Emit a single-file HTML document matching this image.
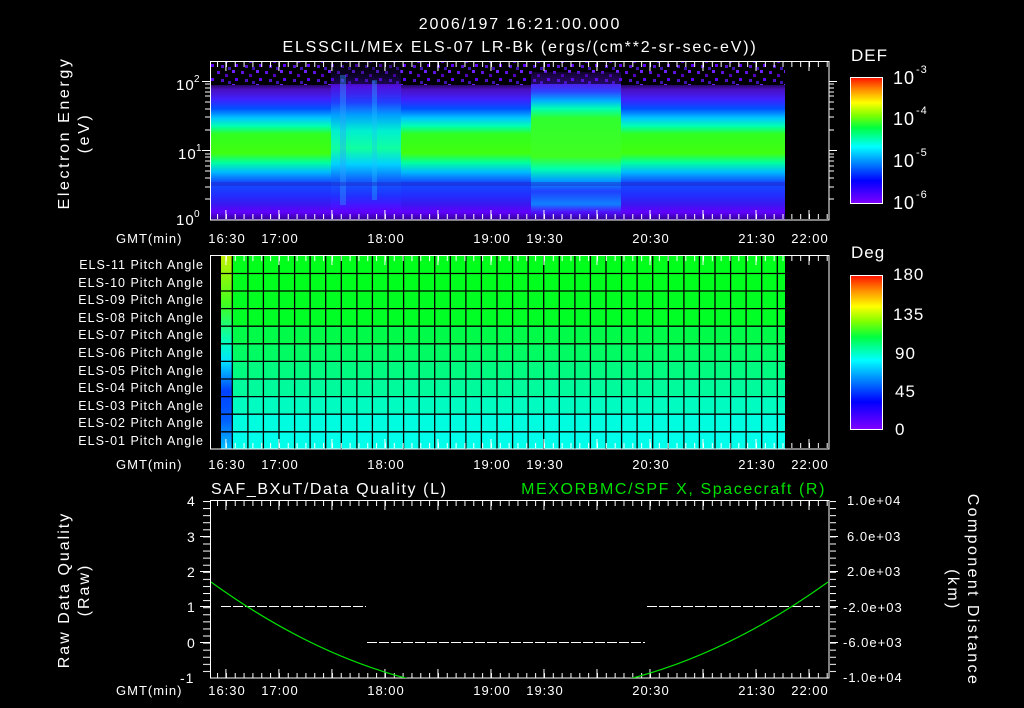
<!DOCTYPE html>
<html><head><meta charset="utf-8"><style>
html,body{margin:0;padding:0;background:#000;}
svg{display:block;}
text{font-family:"Liberation Sans",sans-serif;fill:#fff;letter-spacing:1px;}
</style></head><body>
<svg width="1024" height="708" viewBox="0 0 1024 708" xmlns="http://www.w3.org/2000/svg">
<defs>
<pattern id="tmin" x="217.07" y="0" width="8.835" height="708" patternUnits="userSpaceOnUse"><rect x="0" y="0" width="1" height="708" fill="#fff"/></pattern>
<pattern id="tmaj" x="225.4" y="0" width="53.01" height="708" patternUnits="userSpaceOnUse"><rect x="0" y="0" width="1" height="708" fill="#fff"/></pattern>
<pattern id="ymin" x="0" y="501" width="1024" height="7.08" patternUnits="userSpaceOnUse"><rect x="0" y="0" width="1024" height="1" fill="#fff"/></pattern>
<pattern id="speck" x="0" y="0" width="24" height="14" patternUnits="userSpaceOnUse">
<rect width="24" height="14" fill="#000"/>
<rect x="1" y="1" width="3" height="3" fill="#6010e0"/><rect x="9" y="4" width="3" height="3" fill="#5000c0"/>
<rect x="16" y="0" width="3" height="3" fill="#7020ff"/><rect x="5" y="9" width="3" height="3" fill="#5010d0"/>
<rect x="19" y="8" width="3" height="3" fill="#6000ff"/><rect x="12" y="11" width="3" height="3" fill="#4010b0"/>
</pattern>
<linearGradient id="gStd" gradientUnits="userSpaceOnUse" x1="0" y1="61" x2="0" y2="220">
<stop offset="0" stop-color="#000"/><stop offset="0.12" stop-color="#000"/>
<stop offset="0.18" stop-color="#4a10c0"/><stop offset="0.24" stop-color="#4020ff"/>
<stop offset="0.30" stop-color="#0050ff"/><stop offset="0.36" stop-color="#00c8ff"/>
<stop offset="0.41" stop-color="#00ffb0"/><stop offset="0.46" stop-color="#30ff20"/>
<stop offset="0.58" stop-color="#40ff10"/><stop offset="0.64" stop-color="#00ffa0"/>
<stop offset="0.70" stop-color="#00b8ff"/><stop offset="0.76" stop-color="#1050ff"/>
<stop offset="0.84" stop-color="#2030ff"/><stop offset="0.90" stop-color="#3818f0"/>
<stop offset="0.95" stop-color="#6000ff"/><stop offset="1" stop-color="#300090"/>
</linearGradient>
<linearGradient id="gDis" gradientUnits="userSpaceOnUse" x1="0" y1="61" x2="0" y2="220">
<stop offset="0" stop-color="#000"/><stop offset="0.08" stop-color="#1a0850"/>
<stop offset="0.16" stop-color="#5010e0"/><stop offset="0.26" stop-color="#2040ff"/>
<stop offset="0.34" stop-color="#00a0ff"/><stop offset="0.44" stop-color="#00f0d0"/>
<stop offset="0.55" stop-color="#10ffa0"/><stop offset="0.65" stop-color="#00d0ff"/>
<stop offset="0.75" stop-color="#1060ff"/><stop offset="0.85" stop-color="#2030ff"/>
<stop offset="0.95" stop-color="#6000ff"/><stop offset="1" stop-color="#300090"/>
</linearGradient>
<linearGradient id="gTall" gradientUnits="userSpaceOnUse" x1="0" y1="61" x2="0" y2="220">
<stop offset="0" stop-color="#000"/><stop offset="0.06" stop-color="#200860"/>
<stop offset="0.12" stop-color="#5a10e0"/><stop offset="0.19" stop-color="#3040ff"/>
<stop offset="0.25" stop-color="#00b0ff"/><stop offset="0.30" stop-color="#00ffb0"/>
<stop offset="0.36" stop-color="#30ff30"/><stop offset="0.60" stop-color="#40ff20"/>
<stop offset="0.68" stop-color="#00ffb0"/><stop offset="0.75" stop-color="#00a0ff"/>
<stop offset="0.82" stop-color="#2040ff"/><stop offset="0.90" stop-color="#1080ff"/>
<stop offset="0.95" stop-color="#5010ff"/><stop offset="1" stop-color="#300090"/>
</linearGradient>
<linearGradient id="cbar" x1="0" y1="1" x2="0" y2="0">
<stop offset="0" stop-color="#8000ff"/><stop offset="0.18" stop-color="#0000ff"/>
<stop offset="0.35" stop-color="#00a0ff"/><stop offset="0.45" stop-color="#00ffff"/>
<stop offset="0.6" stop-color="#00ff40"/><stop offset="0.7" stop-color="#80ff00"/>
<stop offset="0.8" stop-color="#ffff00"/><stop offset="0.9" stop-color="#ff9000"/>
<stop offset="1" stop-color="#ff1000"/>
</linearGradient>
<linearGradient id="firstcol" x1="0" y1="0" x2="0" y2="1">
<stop offset="0" stop-color="#c0f000"/><stop offset="0.25" stop-color="#40ff20"/>
<stop offset="0.45" stop-color="#00ffc0"/><stop offset="0.55" stop-color="#00e0ff"/>
<stop offset="0.7" stop-color="#0040ff"/><stop offset="0.85" stop-color="#0060ff"/>
<stop offset="1" stop-color="#00c0ff"/>
</linearGradient>
<clipPath id="bclip"><rect x="211" y="501" width="618" height="177"/></clipPath>
</defs>

<text x="520" y="29" font-size="16" text-anchor="middle" style="letter-spacing:1.8px">2006/197 16:21:00.000</text>
<text x="520" y="52" font-size="16" text-anchor="middle" style="letter-spacing:1.8px">ELSSCIL/MEx ELS-07 LR-Bk  (ergs/(cm**2-sr-sec-eV))</text>

<rect x="211" y="62" width="574" height="30" fill="url(#speck)"/>
<rect x="211" y="85" width="120" height="135" fill="url(#gStd)"/>
<rect x="331" y="62" width="70" height="158" fill="url(#gDis)"/>
<rect x="401" y="85" width="130" height="135" fill="url(#gStd)"/>
<rect x="531" y="72" width="90" height="148" fill="url(#gTall)"/>
<rect x="621" y="85" width="164" height="135" fill="url(#gStd)"/>
<rect x="211" y="62" width="574" height="22" fill="url(#speck)" opacity="0.6"/>
<rect x="340" y="75" width="6" height="130" fill="#30a0ff" opacity="0.4"/>
<rect x="372" y="80" width="5" height="120" fill="#20c0ff" opacity="0.35"/>
<rect x="211" y="182" width="574" height="4" fill="#2020c0" opacity="0.4"/>
<rect x="210.5" y="61.5" width="618.5" height="158.5" fill="none" stroke="#fff"/>
<rect x="211" y="62" width="617" height="5" fill="url(#tmin)"/>
<rect x="211" y="62" width="617" height="9" fill="url(#tmaj)"/>
<rect x="211" y="214" width="617" height="5" fill="url(#tmin)"/>
<rect x="211" y="210" width="617" height="9" fill="url(#tmaj)"/>
<g stroke="#fff" stroke-width="1">
<path d="M202 150.5H210M202 81.5H210M205 199H210M205 187H210M205 178H210M205 171H210M205 166H210M205 161H210M205 157H210M205 154H210M205 130H210M205 117H210M205 109H210M205 102H210M205 96H210M205 92H210M205 88H210M205 84H210"/>
<path d="M829 150.5H837M829 81.5H837M829 199H834M829 187H834M829 178H834M829 171H834M829 166H834M829 161H834M829 157H834M829 154H834M829 130H834M829 117H834M829 109H834M829 102H834M829 96H834M829 92H834M829 88H834M829 84H834"/>
</g>
<text x="176" y="90" font-size="15">10</text><text x="194" y="82" font-size="10">2</text>
<text x="178" y="159" font-size="15">10</text><text x="196" y="151" font-size="10">1</text>
<text x="176" y="225" font-size="15">10</text><text x="194" y="217" font-size="10">0</text>
<text transform="translate(69,133) rotate(-90)" font-size="16" text-anchor="middle" style="letter-spacing:2.6px">Electron Energy</text>
<text transform="translate(89,133) rotate(-90)" font-size="16" text-anchor="middle" style="letter-spacing:2.6px">(eV)</text>

<text x="851" y="61" font-size="17">DEF</text>
<rect x="850.5" y="77.5" width="32" height="126" fill="url(#cbar)" stroke="#fff"/>
<text x="893" y="84" font-size="18">10</text><text x="916" y="73" font-size="11">-3</text>
<text x="893" y="125" font-size="18">10</text><text x="916" y="114" font-size="11">-4</text>
<text x="893" y="167" font-size="18">10</text><text x="916" y="156" font-size="11">-5</text>
<text x="893" y="209" font-size="18">10</text><text x="916" y="198" font-size="11">-6</text>

<g font-size="13" style="letter-spacing:1.5px">
<text x="116" y="243">GMT(min)</text>
<text x="227" y="243" text-anchor="middle">16:30</text><text x="280" y="243" text-anchor="middle">17:00</text>
<text x="386" y="243" text-anchor="middle">18:00</text><text x="492" y="243" text-anchor="middle">19:00</text>
<text x="545" y="243" text-anchor="middle">19:30</text><text x="651" y="243" text-anchor="middle">20:30</text>
<text x="757" y="243" text-anchor="middle">21:30</text><text x="810" y="243" text-anchor="middle">22:00</text>
</g>

<g>
<rect x="221" y="256" width="564" height="17.6" fill="#00ff1a"/>
<rect x="221" y="273.5" width="564" height="17.6" fill="#00ff1c"/>
<rect x="221" y="291" width="564" height="17.6" fill="#00ff20"/>
<rect x="221" y="308.6" width="564" height="17.6" fill="#00ff24"/>
<rect x="221" y="326.2" width="564" height="17.6" fill="#00fb48"/>
<rect x="221" y="343.8" width="564" height="17.6" fill="#00fb62"/>
<rect x="221" y="361.4" width="564" height="17.6" fill="#00fb80"/>
<rect x="221" y="379" width="564" height="17.6" fill="#00fb9c"/>
<rect x="221" y="396.6" width="564" height="17.6" fill="#00fcc0"/>
<rect x="221" y="414.2" width="564" height="17.6" fill="#00fde0"/>
<rect x="221" y="431.8" width="564" height="17.2" fill="#00ffea"/>
<rect x="221" y="256" width="11" height="193" fill="url(#firstcol)"/>
</g>
<g stroke="#000" stroke-width="1.3">
<path d="M221 273.5H785M221 291H785M221 308.6H785M221 326.2H785M221 343.8H785M221 361.4H785M221 379H785M221 396.6H785M221 414.2H785M221 431.8H785"/>
<path d="M232.3 256V449M247.9 256V449M263.4 256V449M279 256V449M294.6 256V449M310.1 256V449M325.7 256V449M341.3 256V449M356.9 256V449M372.4 256V449M388 256V449M403.6 256V449M419.1 256V449M434.7 256V449M450.3 256V449M465.9 256V449M481.4 256V449M497 256V449M512.6 256V449M528.1 256V449M543.7 256V449M559.3 256V449M574.9 256V449M590.4 256V449M606 256V449M621.6 256V449M637.1 256V449M652.7 256V449M668.3 256V449M683.9 256V449M699.4 256V449M715 256V449M730.6 256V449M746.1 256V449M761.7 256V449M777.3 256V449"/>
</g>
<rect x="210.5" y="255.5" width="618.5" height="193.5" fill="none" stroke="#fff"/>
<rect x="221" y="256" width="607" height="5" fill="url(#tmin)"/>
<rect x="221" y="256" width="607" height="9" fill="url(#tmaj)"/>
<rect x="221" y="443" width="607" height="5" fill="url(#tmin)"/>
<rect x="221" y="439" width="607" height="9" fill="url(#tmaj)"/>
<g font-size="12.5" text-anchor="end" style="letter-spacing:1.4px">
<text x="204" y="269">ELS-11 Pitch Angle</text>
<text x="204" y="287">ELS-10 Pitch Angle</text>
<text x="204" y="304">ELS-09 Pitch Angle</text>
<text x="204" y="322">ELS-08 Pitch Angle</text>
<text x="204" y="339">ELS-07 Pitch Angle</text>
<text x="204" y="357">ELS-06 Pitch Angle</text>
<text x="204" y="375">ELS-05 Pitch Angle</text>
<text x="204" y="392">ELS-04 Pitch Angle</text>
<text x="204" y="410">ELS-03 Pitch Angle</text>
<text x="204" y="427">ELS-02 Pitch Angle</text>
<text x="204" y="445">ELS-01 Pitch Angle</text>
</g>
<text x="851" y="258" font-size="17">Deg</text>
<rect x="850.5" y="275.5" width="32" height="154" fill="url(#cbar)" stroke="#fff"/>
<g font-size="17">
<text x="893" y="280">180</text><text x="893" y="320">135</text><text x="895" y="359">90</text>
<text x="895" y="397">45</text><text x="895" y="435">0</text>
</g>
<g font-size="13" style="letter-spacing:1.5px">
<text x="116" y="469">GMT(min)</text>
<text x="227" y="469" text-anchor="middle">16:30</text><text x="280" y="469" text-anchor="middle">17:00</text>
<text x="386" y="469" text-anchor="middle">18:00</text><text x="492" y="469" text-anchor="middle">19:00</text>
<text x="545" y="469" text-anchor="middle">19:30</text><text x="651" y="469" text-anchor="middle">20:30</text>
<text x="757" y="469" text-anchor="middle">21:30</text><text x="810" y="469" text-anchor="middle">22:00</text>
</g>

<text x="211" y="494" font-size="16" style="letter-spacing:1.6px">SAF_BXuT/Data Quality (L)</text>
<text x="826" y="494" font-size="16" text-anchor="end" style="fill:#00e000;letter-spacing:1.6px">MEXORBMC/SPF X, Spacecraft (R)</text>
<rect x="210.5" y="500.5" width="618.5" height="177.5" fill="none" stroke="#fff"/>
<rect x="211" y="501" width="617" height="5" fill="url(#tmin)"/>
<rect x="211" y="501" width="617" height="9" fill="url(#tmaj)"/>
<rect x="211" y="673" width="617" height="5" fill="url(#tmin)"/>
<rect x="211" y="669" width="617" height="9" fill="url(#tmaj)"/>
<rect x="203" y="501" width="7" height="177" fill="url(#ymin)"/>
<rect x="830" y="501" width="6" height="177" fill="url(#ymin)"/>
<g stroke="#fff"><path d="M200 536.5H210M200 571.5H210M200 606.5H210M200 642.5H210M830 536.5H838M830 571.5H838M830 606.5H838M830 642.5H838"/></g>
<g font-size="14">
<text x="187" y="506">4</text><text x="187" y="542">3</text><text x="187" y="577">2</text>
<text x="187" y="612">1</text><text x="187" y="648">0</text><text x="180" y="683">-1</text>
</g>
<g font-size="13" style="letter-spacing:1.2px">
<text x="847" y="505">1.0e+04</text><text x="847" y="541">6.0e+03</text>
<text x="847" y="576">2.0e+03</text><text x="843" y="612">-2.0e+03</text>
<text x="843" y="647">-6.0e+03</text><text x="843" y="682">-1.0e+04</text>
</g>
<g stroke="#fff" stroke-width="1" stroke-dasharray="10 2">
<path d="M221 606.5H366M367 642.5H645M647 606.5H820"/>
</g>
<g clip-path="url(#bclip)"><path d="M211 582Q518.5 804.2 828 582" fill="none" stroke="#00e000" stroke-width="1.2"/></g>
<text transform="translate(69,590) rotate(-90)" font-size="16" text-anchor="middle" style="letter-spacing:2px">Raw Data Quality</text>
<text transform="translate(89,590) rotate(-90)" font-size="16" text-anchor="middle" style="letter-spacing:2px">(Raw)</text>
<text transform="translate(968,590) rotate(90)" font-size="16" text-anchor="middle" style="letter-spacing:2.4px">Component Distance</text>
<text transform="translate(948,590) rotate(90)" font-size="16" text-anchor="middle" style="letter-spacing:2.4px">(km)</text>
<g font-size="13" style="letter-spacing:1.5px">
<text x="116" y="695">GMT(min)</text>
<text x="227" y="695" text-anchor="middle">16:30</text><text x="280" y="695" text-anchor="middle">17:00</text>
<text x="386" y="695" text-anchor="middle">18:00</text><text x="492" y="695" text-anchor="middle">19:00</text>
<text x="545" y="695" text-anchor="middle">19:30</text><text x="651" y="695" text-anchor="middle">20:30</text>
<text x="757" y="695" text-anchor="middle">21:30</text><text x="810" y="695" text-anchor="middle">22:00</text>
</g>
</svg>
</body></html>
